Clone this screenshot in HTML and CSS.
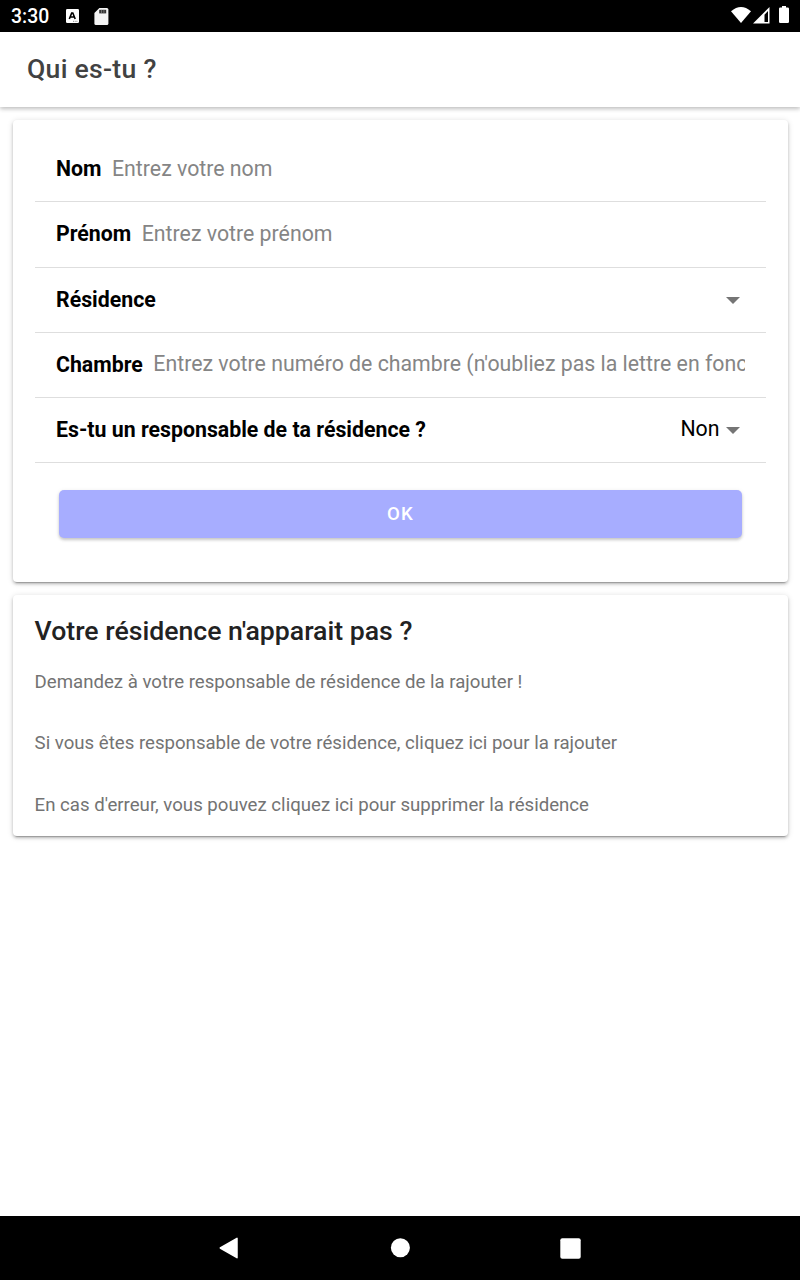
FILE: index.html
```html
<!DOCTYPE html>
<html lang="fr">
<head>
<meta charset="utf-8">
<title>Qui es-tu ?</title>
<link rel="stylesheet" href="styles.css">
</head>
<body>
<div class="screen">
  <div class="statusbar">
    <span class="clock">3:30</span>
    <svg class="icon-letter" width="13" height="14" viewBox="0 0 13 14"><rect width="13" height="14" rx="1.200" fill="#fff"/><path d="M3.300 10 5.700 4h1.100l2.400 6M4.300 8h4" fill="none" stroke="#000" stroke-width="1.600"/><path d="M7 12.300h5" stroke="#666" stroke-width=".8" stroke-dasharray="1 .7"/></svg>
    <svg class="icon-card" width="15" height="17" viewBox="0 0 15 17"><path d="M5.400 0h7.500q1.500 0 1.500 1.500v14q0 1.500-1.500 1.500h-11Q.4 17 .4 15.500V5z" fill="#f4f4f4"/><path d="M5.200 1.800h7v3.600h-7z" fill="#333"/><path d="M7.500 1.800v3.600M9.900 1.800v3.600" stroke="#999" stroke-width=".6"/></svg>
    <svg class="icons-right" width="60" height="18" viewBox="0 0 60 18"><path d="M1 5.300Q11 -3.200 21 5.300L11 17z" fill="#fff"/><path d="M39.500 1v16.500H23z" fill="#fff"/><path d="M38 5v11h-3.500V8.700z" fill="#000"/><path d="M52 0h4v1.500h1.700q1.300 0 1.300 1.300v13q0 1.200-1.300 1.200h-7.400Q49 17 49 15.800v-13q0-1.300 1.300-1.300H52z" fill="#fff"/></svg>
  </div>
  <header class="toolbar"><h1>Qui es-tu ?</h1></header>
  <main class="content">
    <section class="card form-card">
      <div class="item"><span class="label">Nom</span><span class="placeholder">Entrez votre nom</span></div>
      <div class="item tall"><span class="label">Prénom</span><span class="placeholder">Entrez votre prénom</span></div>
      <div class="item"><span class="label">Résidence</span><span class="value"></span><i class="caret"></i></div>
      <div class="item"><span class="label">Chambre</span><span class="placeholder raised">Entrez votre numéro de chambre (n'oubliez pas la lettre en fonction)</span></div>
      <div class="item"><span class="label">Es-tu un responsable de ta résidence ?</span><span class="value raised">Non</span><i class="caret"></i></div>
      <button class="ok">OK</button>
    </section>
    <section class="card info-card">
      <h2>Votre résidence n'apparait pas ?</h2>
      <p>Demandez à votre responsable de résidence de la rajouter !</p>
      <p>Si vous êtes responsable de votre résidence, cliquez ici pour la rajouter</p>
      <p>En cas d'erreur, vous pouvez cliquez ici pour supprimer la résidence</p>
    </section>
  </main>
  <nav class="navbar">
    <svg width="20" height="22" viewBox="0 0 20 22"><path d="M18 1.300v19.400L1.300 11z" fill="#fff" stroke="#fff" stroke-width="1.500" stroke-linejoin="round"/></svg>
    <svg width="20" height="20" viewBox="0 0 20 20"><circle cx="10.400" cy="9.700" r="9.500" fill="#fff"/></svg>
    <svg width="21" height="21" viewBox="0 0 21 21"><rect x=".3" y=".3" width="20.400" height="20.400" rx="2" fill="#fff"/></svg>
  </nav>
</div>
</body>
</html>
```
FILE: styles.css
```css
* { box-sizing: border-box; }
body { margin: 0; font-family: Roboto, "Liberation Sans", sans-serif; background: #fff; color: #000; }
.screen { display: flex; flex-direction: column; width: 800px; height: 1280px; overflow: hidden; }
.statusbar { display: flex; flex: none; height: 32px; padding: 0 11px; background: #000; color: #fff; }
.clock { width: 55px; font-size: 19.400px; font-weight: 500; line-height: 34px; }
.icon-letter { margin-top: 9px; }
.icon-card { margin: 8px 0 0 15px; }
.icons-right { margin: 6px -1px 0 auto; }
.toolbar { flex: none; height: 75px; padding: 0 27px; background: #fff; box-shadow: 0 2px 4px rgba(0,0,0,.2), 0 1px 6px rgba(0,0,0,.08); }
.toolbar h1 { margin: 0; font-size: 26.600px; font-weight: 500; line-height: 73px; letter-spacing: .27px; color: #424242; }
.content { flex: 1; padding: 13px 12px 0 13px; }
.card { border-radius: 4px; background: #fff; box-shadow: 0 3px 1px -2px rgba(0,0,0,.2), 0 2px 3px rgba(0,0,0,.2), 0 1px 6px rgba(0,0,0,.14); }
.form-card { height: 462px; padding: 17px 22px 0; }
.item { display: flex; align-items: center; height: 65px; padding: 0 21px; border-bottom: 1px solid #dedede; font-size: 21.300px; line-height: 28px; white-space: nowrap; }
.item.tall { height: 66px; padding-bottom: 1px; }
.label { font-weight: 700; }
.placeholder { flex: 1; min-width: 0; margin-left: 10.500px; overflow: hidden; color: #858585; }
.value { margin-left: auto; }
.raised { margin-bottom: 2px; }
.caret { margin: 1px 5px 0 6.500px; border: 7px solid transparent; border-top-color: #757575; border-bottom: 0; }
.ok { display: block; width: 683px; height: 48px; margin: 27px 24px 0; padding: 0; border: 0; border-radius: 5px; background: #a7adff; color: #fff; font: 500 18.600px/48px Roboto, sans-serif; letter-spacing: 1.100px; box-shadow: 0 2px 3px rgba(0,0,0,.18), 0 1px 5px rgba(0,0,0,.08); }
.info-card { height: 241px; margin-top: 13px; padding: 18px 21.600px 0; }
.info-card h2 { margin: 0; font-size: 26.650px; font-weight: 500; line-height: 36px; color: #222; }
.info-card p { margin: 0 0 33.500px; font-size: 18.640px; line-height: 28px; color: #737373; }
.info-card h2 + p { margin-top: 18.600px; }
.navbar { display: flex; flex: none; align-items: center; justify-content: space-between; height: 64px; padding: 0 219px; background: #000; }
```
